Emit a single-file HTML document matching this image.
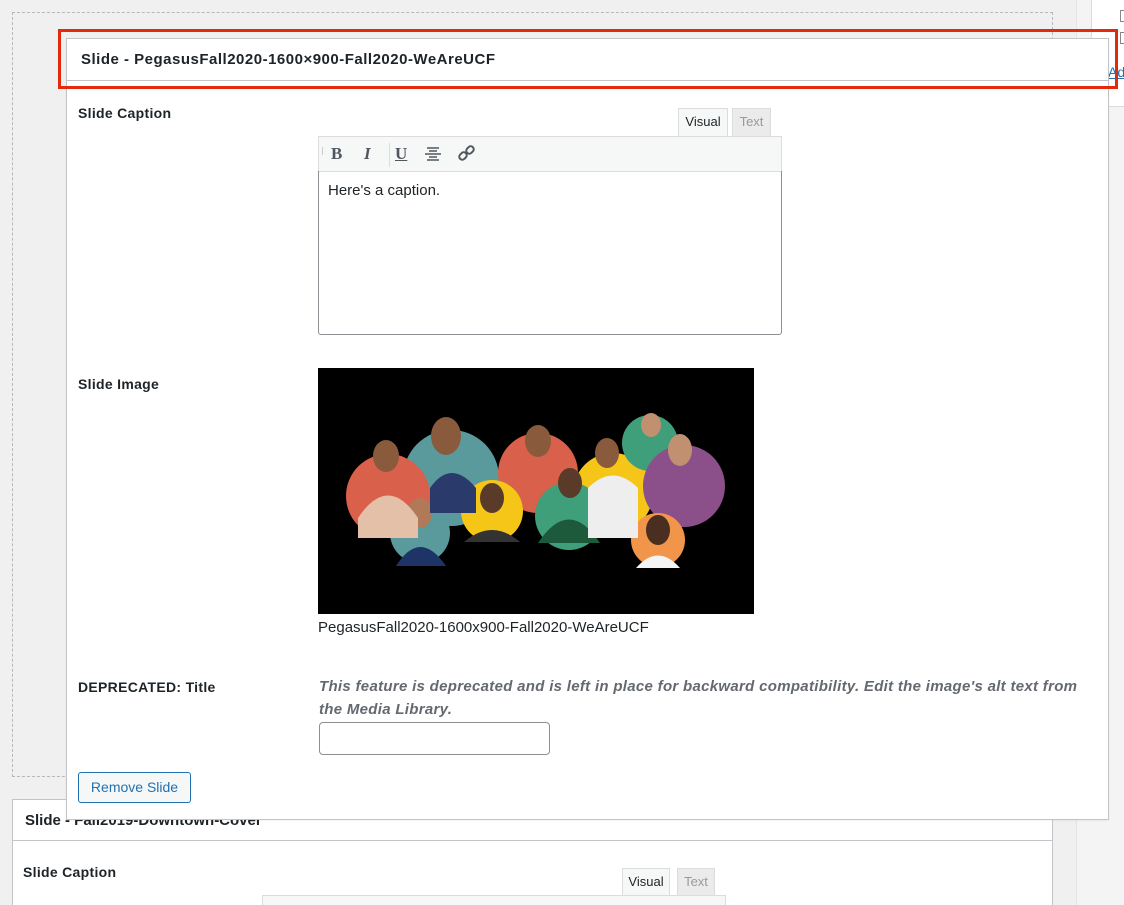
<!DOCTYPE html>
<html style="overflow:hidden"><head><meta charset="utf-8"><style>
*{box-sizing:border-box;margin:0;padding:0}
html,body{width:1124px;height:905px;overflow:hidden}
body{background:#f0f0f1;font-family:"Liberation Sans",Arial,sans-serif;font-size:14px;color:#1d2327;position:relative}
.abs{position:absolute}
.lbl{position:absolute;font-weight:bold;font-size:14px;letter-spacing:0.3px}
.tab{position:absolute;font-size:13px;text-align:center;line-height:26px;border:1px solid #dcdcde;border-bottom:none}
</style></head><body>
<div class="abs" style="left:1076px;top:0;width:48px;height:905px;background:#f4f4f5;border-left:1px solid #e5e5e5"></div>
<div class="abs" style="left:1091px;top:0;width:40px;height:107px;background:#fff;border-left:1px solid #dcdcde;border-bottom:1px solid #dcdcde"></div>
<div class="abs" style="left:1108px;top:64px;color:#2271b1;text-decoration:underline;font-size:14px">Ad</div>
<div class="abs" style="left:1120px;top:10px;width:4px;height:12px;border:1px solid #888;border-right:none"></div>
<div class="abs" style="left:1120px;top:32px;width:4px;height:12px;border:1px solid #888;border-right:none"></div>
<div class="abs" style="left:12px;top:12px;width:1041px;height:765px;border:1px dashed #b4b9be"></div>
<div class="abs" style="left:12px;top:799px;width:1041px;height:120px;background:#fff;border:1px solid #c3c4c7">
  <div style="height:41px;border-bottom:1px solid #c3c4c7;padding:12px 0 0 12px;font-weight:bold;font-size:15px">Slide - Fall2019-Downtown-Cover</div>
</div>
<div class="lbl" style="left:23px;top:864px">Slide Caption</div>
<div class="tab" style="left:622px;top:868px;width:48px;height:28px;background:#f6f7f7">Visual</div>
<div class="tab" style="left:677px;top:868px;width:38px;height:28px;background:#ebebeb;color:#999">Text</div>
<div class="abs" style="left:262px;top:895px;width:464px;height:20px;background:#f6f7f7;border:1px solid #dcdcde"></div>
<div class="abs" style="left:66px;top:38px;width:1043px;height:782px;background:#fff;border:1px solid #c3c4c7;box-shadow:0 1px 2px rgba(0,0,0,.05)">
  <div style="height:42px;border-bottom:1px solid #c3c4c7;padding:12px 0 0 14px;font-weight:bold;font-size:15px;letter-spacing:0.5px">Slide - PegasusFall2020-1600×900-Fall2020-WeAreUCF</div>
</div>
<div class="abs" style="left:58px;top:29px;width:1060px;height:60px;border:3px solid #e32a0c"></div>
<div class="lbl" style="left:78px;top:105px">Slide Caption</div>
<div class="tab" style="left:678px;top:108px;width:50px;height:28px;background:#f6f7f7">Visual</div>
<div class="tab" style="left:732px;top:108px;width:39px;height:28px;background:#ebebeb;color:#999">Text</div>
<div class="abs" style="left:318px;top:136px;width:464px;height:36px;background:#f6f7f7;border:1px solid #dcdcde;font-family:'Liberation Serif',serif;font-size:17px;color:#50575e">
  <span class="abs" style="left:3px;top:10px;width:1px;height:8px;background:#ccc"></span>
  <b class="abs" style="left:12px;top:7px">B</b>
  <i class="abs" style="left:45px;top:7px;font-weight:bold">I</i>
  <span class="abs" style="left:70px;top:6px;width:1px;height:24px;background:#ddd"></span>
  <b class="abs" style="left:76px;top:7px;text-decoration:underline">U</b>
  <svg class="abs" style="left:106px;top:9px" width="16" height="16"><g stroke="#50575e" stroke-width="1.5"><line x1="2" y1="2" x2="14" y2="2"/><line x1="4" y1="5" x2="12" y2="5"/><line x1="0" y1="8" x2="16" y2="8"/><line x1="4" y1="11" x2="12" y2="11"/><line x1="2" y1="14" x2="14" y2="14"/></g></svg>
  <svg class="abs" style="left:138px;top:7px" width="20" height="20"><g fill="none" stroke="#50575e" stroke-width="2"><rect x="2" y="9" width="8" height="6" rx="3" transform="rotate(-45 6 12)"/><rect x="9" y="3" width="8" height="6" rx="3" transform="rotate(-45 13 6)"/></g></svg>
</div>
<div class="abs" style="left:318px;top:171px;width:464px;height:164px;border:1px solid #8c8f94;border-top:none;border-radius:0 0 3px 3px;padding:11px 9px;font-size:15px">Here's a caption.</div>
<div class="lbl" style="left:78px;top:376px">Slide Image</div>
<svg class="abs" style="left:318px;top:368px" width="436" height="246" viewBox="0 0 436 246">
<rect width="436" height="246" fill="#000"/>
<circle cx="133" cy="110" r="48" fill="#5a9a9c"/>
<circle cx="70" cy="128" r="42" fill="#d9604a"/>
<circle cx="220" cy="105" r="40" fill="#d9604a"/>
<circle cx="295" cy="125" r="40" fill="#f5c518"/>
<circle cx="332" cy="75" r="28" fill="#3f9f7a"/>
<circle cx="366" cy="118" r="41" fill="#8b4f8a"/>
<circle cx="102" cy="165" r="30" fill="#5a9a9c"/>
<circle cx="174" cy="143" r="31" fill="#f5c518"/>
<circle cx="251" cy="148" r="34" fill="#3f9f7a"/>
<circle cx="340" cy="172" r="27" fill="#f0954a"/>
<g fill="#8a5a3c">
<ellipse cx="68" cy="88" rx="13" ry="16"/><ellipse cx="128" cy="68" rx="15" ry="19"/><ellipse cx="220" cy="73" rx="13" ry="16"/>
<ellipse cx="289" cy="85" rx="12" ry="15"/><ellipse cx="333" cy="57" rx="10" ry="12" fill="#c09070"/><ellipse cx="362" cy="82" rx="12" ry="16" fill="#c09070"/>
<ellipse cx="102" cy="145" rx="12" ry="15" fill="#b07a58"/><ellipse cx="174" cy="130" rx="12" ry="15" fill="#5a3a28"/><ellipse cx="252" cy="115" rx="12" ry="15" fill="#5a3a28"/><ellipse cx="340" cy="162" rx="12" ry="15" fill="#4a2e20"/>
</g>
<path d="M40 150 Q70 105 100 150 L100 170 L40 170Z" fill="#e4c0a8"/>
<path d="M112 120 Q133 90 158 120 L158 145 L112 145Z" fill="#2a3a6a"/>
<path d="M78 198 Q102 160 128 198Z" fill="#1f3466"/>
<path d="M146 174 Q174 150 202 174Z" fill="#333"/>
<path d="M220 175 Q251 128 282 175Z" fill="#1d5a3c"/>
<path d="M270 120 Q295 95 320 120 L320 170 L270 170Z" fill="#eee"/>
<path d="M318 200 Q340 175 362 200Z" fill="#f4f4f4"/>
</svg>
<div class="abs" style="left:318px;top:619px;font-size:15px">PegasusFall2020-1600x900-Fall2020-WeAreUCF</div>
<div class="lbl" style="left:78px;top:679px">DEPRECATED: Title</div>
<div class="abs" style="left:319px;top:675px;width:790px;font-size:15px;letter-spacing:0.3px;font-style:italic;font-weight:bold;color:#646970;line-height:23px;white-space:nowrap">This feature is deprecated and is left in place for backward compatibility. Edit the image's alt text from<br>the Media Library.</div>
<div class="abs" style="left:319px;top:722px;width:231px;height:33px;border:1px solid #8c8f94;border-radius:4px;background:#fff"></div>
<div class="abs" style="left:78px;top:772px;width:113px;height:31px;border:1px solid #2271b1;border-radius:3px;background:#f6f7f7;color:#2271b1;font-size:14px;text-align:center;line-height:29px">Remove Slide</div>
</body></html>
